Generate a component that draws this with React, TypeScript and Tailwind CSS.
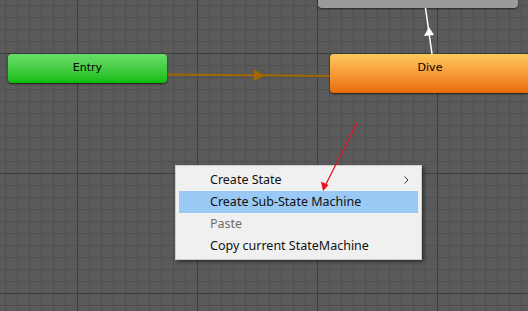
import React from 'react';

const W = 528;
const H = 311;

const GridLines: React.FC = () => {
  const minorX: number[] = [];
  const minorY: number[] = [];
  for (let x = 5; x < W; x += 12) minorX.push(x);
  for (let y = 5; y < H; y += 12) minorY.push(y);
  return (
    <svg className="absolute inset-0" width={W} height={H} viewBox={`0 0 ${W} ${H}`}>
      {minorX.map((x) => (
        <rect key={`vx${x}`} x={x} y={0} width={1} height={H} fill={(x - 77) % 120 === 0 ? '#3d3d3d' : '#505050'} />
      ))}
      {minorY.map((y) => (
        <rect key={`hy${y}`} x={0} y={y} width={W} height={1} fill={(y - 53) % 120 === 0 ? '#3d3d3d' : '#505050'} />
      ))}
    </svg>
  );
};

const Connections: React.FC = () => (
  <svg className="absolute inset-0" width={W} height={H} viewBox={`0 0 ${W} ${H}`}>
    {/* entry -> dive */}
    <line x1={167} y1={74.5} x2={330} y2={76} stroke="#a06800" strokeWidth={2} />
    <polygon points="254,69.5 265,75.5 254,81" fill="#a06800" />
    {/* dive -> parent */}
    <line x1={432} y1={54} x2={425.5} y2={8} stroke="#ffffff" strokeWidth={1.5} />
    <polygon points="429,27 434,35 424,36" fill="#ffffff" />
  </svg>
);

const RedArrow: React.FC = () => (
  <svg className="absolute inset-0 pointer-events-none" width={W} height={H} viewBox={`0 0 ${W} ${H}`}>
    <line x1={357} y1={123} x2={325.5} y2={185} stroke="#e8141b" strokeWidth={1.3} />
    <polygon points="323,191 321,181.5 328.5,185" fill="#e8141b" />
  </svg>
);

const MenuItem: React.FC<{ label: string; active?: boolean; disabled?: boolean; sub?: boolean }> = ({
  label,
  active,
  disabled,
  sub,
}) => (
  <div
    className={`h-[22px] flex items-center justify-between pl-[31px] pr-[9px] ${active ? 'bg-[#99c9f4]' : ''} ${
      disabled ? 'text-[#6d6d6d]' : 'text-[#111111]'
    }`}
  >
    <span>{label}</span>
    {sub && (
      <svg width="5" height="8" viewBox="0 0 5 8">
        <path d="M0.5 0.5 L4 4 L0.5 7.5" fill="none" stroke="#333333" strokeWidth="1" />
      </svg>
    )}
  </div>
);

export default function App() {
  return (
    <div
      className="relative w-[528px] h-[311px] overflow-hidden bg-[#5a5a5a]"
      style={{ fontFamily: '"DejaVu Sans", sans-serif' }}
    >
      <GridLines />

      {/* parent state machine node (cut off at the top) */}
      <div className="absolute left-[318px] top-[-20px] w-[200px] h-[28px] rounded-[4px] bg-[#9a9a9a] shadow-[0_1px_2px_rgba(0,0,0,0.6)]" />

      <Connections />

      {/* Entry node */}
      <div className="absolute left-[8px] top-[54px] w-[159px] h-[29px] rounded-[4px] bg-gradient-to-b from-[#68de68] to-[#00bc00] shadow-[0_1px_2px_rgba(0,0,0,0.7)] flex items-center justify-center text-[11px] text-black">
        Entry
      </div>

      {/* Dive node */}
      <div className="absolute left-[330px] top-[54px] w-[200px] h-[39px] rounded-[4px] bg-gradient-to-b from-[#ffc95c] to-[#e86a00] shadow-[0_1px_2px_rgba(0,0,0,0.7)] flex items-center justify-center text-[11px] text-black pb-[11px]">
        Dive
      </div>

      {/* context menu */}
      <div
        className="absolute left-[175px] top-[165px] w-[247px] pt-[3px] pb-[2px] px-[3px] bg-[#f0f0f0] border border-[#cccccc] shadow-[2px_2px_3px_rgba(0,0,0,0.45)] text-[12.5px]"
        style={{ fontFamily: '"Noto Sans", sans-serif' }}
      >
        <MenuItem label="Create State" sub />
        <MenuItem label="Create Sub-State Machine" active />
        <MenuItem label="Paste" disabled />
        <MenuItem label="Copy current StateMachine" />
      </div>

      <RedArrow />
    </div>
  );
}
